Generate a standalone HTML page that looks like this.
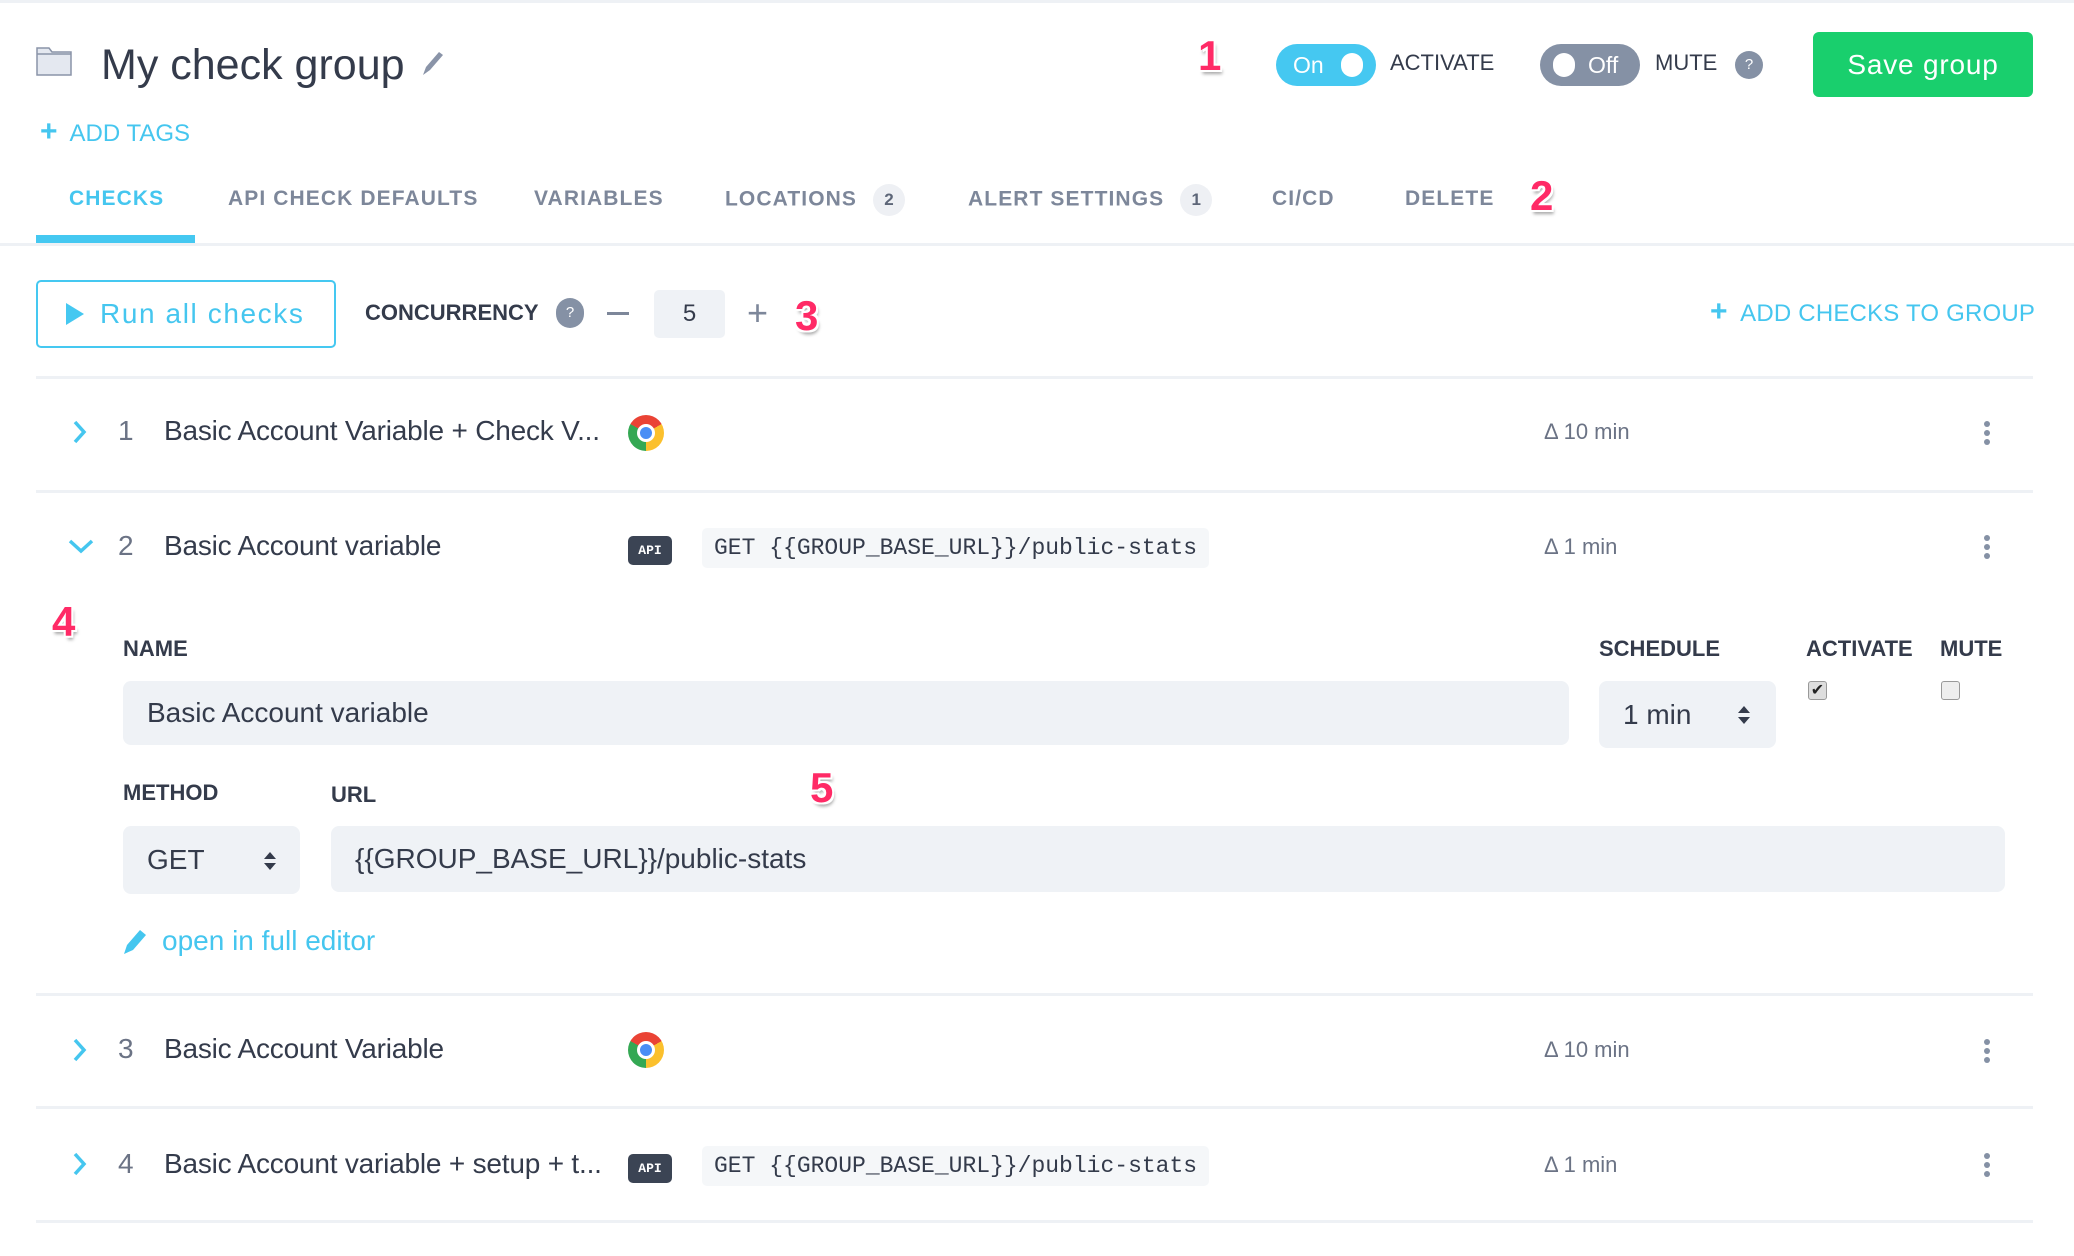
<!DOCTYPE html>
<html><head><meta charset="utf-8"><style>
*{margin:0;padding:0;box-sizing:border-box}
body{width:2074px;height:1256px;background:#fff;font-family:"Liberation Sans",sans-serif;color:#343b4b;position:relative;overflow:hidden}
.a{position:absolute;white-space:nowrap}
.tab{position:absolute;top:184px;height:30px;line-height:30px;font-size:21px;font-weight:bold;color:#7d879a;letter-spacing:1.1px}
.badge{display:inline-block;width:32px;height:32px;border-radius:16px;background:#eef0f4;color:#5d6678;font-size:17px;text-align:center;line-height:32px;margin-left:16px;letter-spacing:0;vertical-align:middle}
.red{position:absolute;color:#ff2a66;font-weight:bold;font-size:42px;text-shadow:2px 2px 0 #fff,-2px -2px 0 #fff,2px -2px 0 #fff,-2px 2px 0 #fff,2px 4px 3px rgba(0,0,0,.35)}
.line{position:absolute;left:36px;width:1997px;height:3px;background:#eef1f5}
.chev{position:absolute}
.num{position:absolute;font-size:28px;color:#6b7385}
.name{position:absolute;font-size:28px;color:#343b4b;letter-spacing:-.2px}
.delta{position:absolute;left:1544px;font-size:22px;color:#6b7385}
.dots{position:absolute;left:1983px;width:8px}
.dots i{display:block;width:6px;height:6px;border-radius:3px;background:#8591a5;margin:0 0 3px 1px}
.api{position:absolute;left:628px;width:44px;height:29px;background:#3b4454;color:#fff;border-radius:5px;font-family:"Liberation Mono",monospace;font-size:13px;font-weight:bold;text-align:center;line-height:29px}
.code{position:absolute;left:702px;height:40px;padding:0 12px;background:#f5f7f9;border-radius:5px;font-family:"Liberation Mono","DejaVu Sans Mono",monospace;font-size:23px;line-height:40px;color:#343b4b}
.lbl{position:absolute;font-size:22px;font-weight:bold;color:#343b4b}
.inp{position:absolute;background:#eff2f6;border-radius:8px;font-size:28px;color:#343b4b;padding-left:24px;display:flex;align-items:center}
.chrome{position:absolute;width:36px;height:36px;border-radius:50%;background:conic-gradient(from -60deg,#ea4335 0 120deg,#fbc02d 120deg 240deg,#34a853 240deg 360deg)}
.chrome::after{content:"";position:absolute;left:9px;top:9px;width:18px;height:18px;border-radius:50%;background:#4a8ef5;border:3px solid #fff;box-sizing:border-box}
</style></head><body>
<div style="position:absolute;left:0;top:0;width:2074px;height:3px;background:#eef1f5"></div>

<svg class="a" style="left:36px;top:46px" width="36" height="30" viewBox="0 0 36 30"><path d="M1 2h12l3 4h19v23H1z" fill="#e4e8f0" stroke="#8a94a8" stroke-width="1.5"/><path d="M1 8h34" stroke="#8a94a8" stroke-width="1.5"/></svg>
<div class="a" style="left:101px;top:38px;font-size:43px;line-height:54px;color:#343b4b">My check group</div>
<svg class="a" style="left:420px;top:50px" width="26" height="28" viewBox="0 0 26 28"><path d="M3 25l3-8L19 2l4 3L10 20z" fill="#8a94a8"/></svg>

<div class="red" style="left:1198px;top:32px">1</div>
<div class="a" style="left:1276px;top:44px;width:100px;height:42px;border-radius:21px;background:#45c8f1"><span class="a" style="left:17px;top:8px;color:#fff;font-size:23px">On</span><span class="a" style="left:65px;top:9px;width:22px;height:24px;border-radius:11px;background:#fff"></span></div>
<div class="a" style="left:1390px;top:50px;font-size:22px;color:#343b4b">ACTIVATE</div>
<div class="a" style="left:1540px;top:44px;width:100px;height:42px;border-radius:21px;background:#8591a5"><span class="a" style="left:13px;top:9px;width:22px;height:24px;border-radius:11px;background:#fff"></span><span class="a" style="left:48px;top:8px;color:#fff;font-size:23px">Off</span></div>
<div class="a" style="left:1655px;top:50px;font-size:22px;color:#343b4b">MUTE</div>
<div class="a" style="left:1735px;top:51px;width:28px;height:28px;border-radius:14px;background:#8591a5;color:#fff;font-size:15px;text-align:center;line-height:28px">?</div>
<div class="a" style="left:1813px;top:32px;width:220px;height:65px;border-radius:6px;background:#19cf6d;color:#fff;font-size:28px;text-align:center;line-height:65px;letter-spacing:.8px">Save group</div>

<div class="a" style="left:40px;top:116px;font-size:24px;color:#45c6ef;line-height:32px"><b style="font-size:30px">+</b>&nbsp; ADD TAGS</div>

<div class="tab" style="left:69px;color:#45c6ef">CHECKS</div>
<div class="tab" style="left:228px">API CHECK DEFAULTS</div>
<div class="tab" style="left:534px">VARIABLES</div>
<div class="tab" style="left:725px">LOCATIONS<span class="badge">2</span></div>
<div class="tab" style="left:968px">ALERT SETTINGS<span class="badge">1</span></div>
<div class="tab" style="left:1272px">CI/CD</div>
<div class="tab" style="left:1405px">DELETE</div>
<div class="red" style="left:1530px;top:172px">2</div>
<div class="a" style="left:0;top:243px;width:2074px;height:3px;background:#eef1f5"></div>
<div class="a" style="left:36px;top:235px;width:159px;height:8px;background:#45c8f1"></div>

<div class="a" style="left:36px;top:280px;width:300px;height:68px;border:2px solid #45c8f1;border-radius:5px;color:#45c6ef;font-size:28px;line-height:64px;padding-left:28px;letter-spacing:1.6px"><span style="display:inline-block;width:0;height:0;border-left:18px solid #45c8f1;border-top:11px solid transparent;border-bottom:11px solid transparent;margin-right:16px;vertical-align:-2px"></span>Run all checks</div>
<div class="a" style="left:365px;top:300px;font-size:22px;font-weight:bold;color:#343b4b">CONCURRENCY</div>
<div class="a" style="left:556px;top:298px;width:28px;height:30px;border-radius:14px;background:#8591a5;color:#fff;font-size:15px;text-align:center;line-height:30px">?</div>
<div class="a" style="left:607px;top:312px;width:22px;height:3px;background:#7d879a"></div>
<div class="a" style="left:654px;top:290px;width:71px;height:48px;border-radius:5px;background:#eff2f6;font-size:24px;text-align:center;line-height:48px;color:#343b4b">5</div>
<div class="a" style="left:747px;top:298px;font-size:36px;color:#7d879a;line-height:30px">+</div>
<div class="red" style="left:795px;top:292px">3</div>
<div class="a" style="left:1710px;top:296px;font-size:24px;color:#45c6ef;line-height:32px;letter-spacing:.2px"><b style="font-size:30px">+</b>&nbsp; ADD CHECKS TO GROUP</div>

<div class="line" style="top:376px"></div>

<svg class="chev" style="left:72px;top:420px" width="16" height="24" viewBox="0 0 16 24"><path d="M3 2l9 10-9 10" stroke="#45c6ef" stroke-width="3.5" fill="none"/></svg>
<div class="num" style="left:118px;top:415px">1</div>
<div class="name" style="left:164px;top:415px">Basic Account Variable + Check V...</div>
<div class="chrome" style="left:628px;top:415px"></div>
<div class="delta" style="top:419px">Δ 10 min</div>
<div class="dots" style="top:421px"><i></i><i></i><i></i></div>
<div class="line" style="top:490px"></div>

<svg class="chev" style="left:68px;top:538px" width="26" height="16" viewBox="0 0 26 16"><path d="M2 3l11 10 11-10" stroke="#45c6ef" stroke-width="3.5" fill="none"/></svg>
<div class="num" style="left:118px;top:530px">2</div>
<div class="name" style="left:164px;top:530px">Basic Account variable</div>
<div class="api" style="top:536px">API</div>
<div class="code" style="top:528px">GET {{GROUP_BASE_URL}}/public-stats</div>
<div class="delta" style="top:534px">Δ 1 min</div>
<div class="dots" style="top:535px"><i></i><i></i><i></i></div>

<div class="red" style="left:52px;top:598px">4</div>
<div class="lbl" style="left:123px;top:636px">NAME</div>
<div class="lbl" style="left:1599px;top:636px">SCHEDULE</div>
<div class="lbl" style="left:1806px;top:636px">ACTIVATE</div>
<div class="lbl" style="left:1940px;top:636px">MUTE</div>
<div class="inp" style="left:123px;top:681px;width:1446px;height:64px">Basic Account variable</div>
<div class="inp" style="left:1599px;top:681px;width:177px;height:67px">1 min</div>
<svg class="a" style="left:1736px;top:704px" width="16" height="22" viewBox="0 0 16 22"><path d="M8 2l6 7H2zM8 20l6-7H2z" fill="#343b4b"/></svg>
<div class="a" style="left:1808px;top:681px;width:19px;height:19px;border:1px solid #999;border-radius:3px;background:#ddd;font-size:16px;line-height:18px;text-align:center;color:#222">✔</div>
<div class="a" style="left:1941px;top:681px;width:19px;height:19px;border:1px solid #999;border-radius:3px;background:#eee"></div>

<div class="lbl" style="left:123px;top:780px">METHOD</div>
<div class="lbl" style="left:331px;top:782px">URL</div>
<div class="red" style="left:810px;top:764px">5</div>
<div class="inp" style="left:123px;top:826px;width:177px;height:68px">GET</div>
<svg class="a" style="left:262px;top:850px" width="16" height="22" viewBox="0 0 16 22"><path d="M8 2l6 7H2zM8 20l6-7H2z" fill="#343b4b"/></svg>
<div class="inp" style="left:331px;top:826px;width:1674px;height:66px">{{GROUP_BASE_URL}}/public-stats</div>
<svg class="a" style="left:122px;top:928px" width="26" height="28" viewBox="0 0 26 28"><path d="M2 26l3-9L18 2l6 5L11 22z" fill="#45c6ef"/></svg>
<div class="a" style="left:162px;top:925px;font-size:28px;color:#45c6ef">open in full editor</div>

<div class="line" style="top:993px"></div>

<svg class="chev" style="left:72px;top:1038px" width="16" height="24" viewBox="0 0 16 24"><path d="M3 2l9 10-9 10" stroke="#45c6ef" stroke-width="3.5" fill="none"/></svg>
<div class="num" style="left:118px;top:1033px">3</div>
<div class="name" style="left:164px;top:1033px">Basic Account Variable</div>
<div class="chrome" style="left:628px;top:1032px"></div>
<div class="delta" style="top:1037px">Δ 10 min</div>
<div class="dots" style="top:1039px"><i></i><i></i><i></i></div>
<div class="line" style="top:1106px"></div>

<svg class="chev" style="left:72px;top:1152px" width="16" height="24" viewBox="0 0 16 24"><path d="M3 2l9 10-9 10" stroke="#45c6ef" stroke-width="3.5" fill="none"/></svg>
<div class="num" style="left:118px;top:1148px">4</div>
<div class="name" style="left:164px;top:1148px">Basic Account variable + setup + t...</div>
<div class="api" style="top:1154px">API</div>
<div class="code" style="top:1146px">GET {{GROUP_BASE_URL}}/public-stats</div>
<div class="delta" style="top:1152px">Δ 1 min</div>
<div class="dots" style="top:1153px"><i></i><i></i><i></i></div>
<div class="line" style="top:1220px"></div>
</body></html>
